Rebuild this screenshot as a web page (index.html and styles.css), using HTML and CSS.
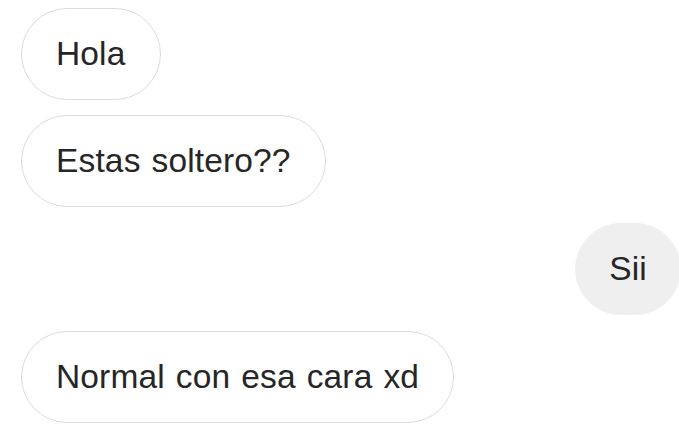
FILE: index.html
```html
<!DOCTYPE html>
<html lang="es">
<head>
<meta charset="utf-8">
<link rel="stylesheet" href="styles.css">
</head>
<body>
<div class="chat">
  <div class="bubble received">Hola</div>
  <div class="bubble received">Estas soltero??</div>
  <div class="bubble sent">Sii</div>
  <div class="bubble received">Normal con esa cara xd</div>
</div>
</body>
</html>
```
FILE: styles.css
```css
html, body {
  margin: 0;
  padding: 0;
  background: #ffffff;
  overflow: hidden;
}
.chat {
  display: flex;
  flex-direction: column;
  align-items: flex-start;
  gap: 15px;
  padding: 8px 0 0 21px;
  width: 679px;
  box-sizing: border-box;
}
.bubble {
  height: 92px;
  box-sizing: border-box;
  border-radius: 46px;
  padding: 0 34px;
  display: flex;
  align-items: center;
  font-family: "Liberation Sans", Arial, sans-serif;
  font-size: 33.5px;
  letter-spacing: 0.15px;
  word-spacing: 1.5px;
  color: #262626;
  white-space: nowrap;
}
.received {
  border: 1.5px solid #dcdcdc;
  background: #ffffff;
}
.sent {
  align-self: flex-end;
  margin-top: 1px;
  margin-right: -2px;
  width: 106px;
  justify-content: center;
  padding: 0;
  background: #efefef;
  border: none;
}
.sent + .received {
  margin-top: 1px;
}
```
